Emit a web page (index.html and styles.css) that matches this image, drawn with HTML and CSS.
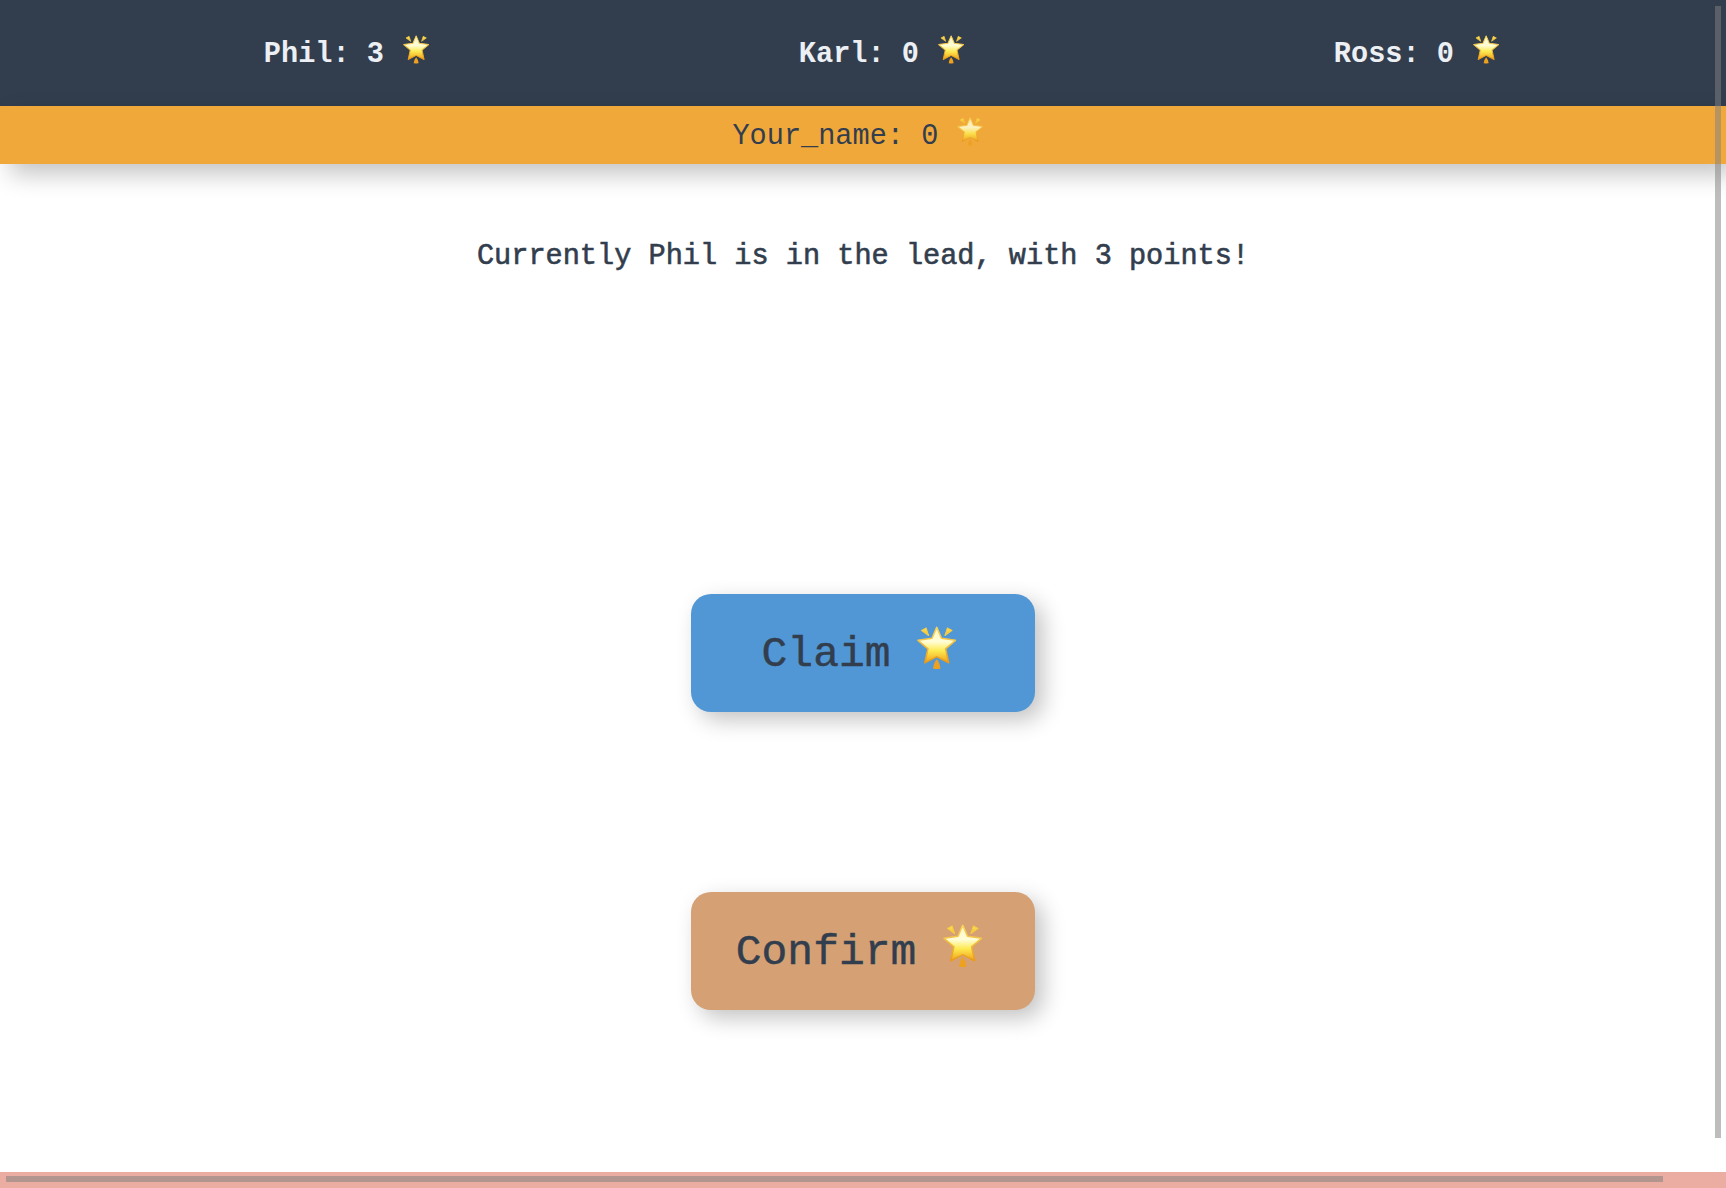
FILE: index.html
```html
<!DOCTYPE html>
<html lang="en">
<head>
<meta charset="utf-8">
<title>Star claims</title>
<link rel="stylesheet" href="styles.css">
</head>
<body>
<svg class="defs" aria-hidden="true">
  <defs>
    <linearGradient id="gold" x1="0" y1="0" x2="0" y2="1">
      <stop offset="0" stop-color="#fff6c0"/>
      <stop offset=".4" stop-color="#fffdd8"/>
      <stop offset=".66" stop-color="#fdea50"/>
      <stop offset="1" stop-color="#f0a01c"/>
    </linearGradient>
    <linearGradient id="rim" x1="0" y1="0" x2="0" y2="1">
      <stop offset="0" stop-color="#f7d55a"/>
      <stop offset=".45" stop-color="#f3c040"/>
      <stop offset="1" stop-color="#ea9a14"/>
    </linearGradient>
    <linearGradient id="ray" x1="0" y1="0" x2="0" y2="1">
      <stop offset="0" stop-color="#fbe45c"/>
      <stop offset="1" stop-color="#f2ba30"/>
    </linearGradient>
    <symbol id="star" viewBox="0 0 116 127">
      <path d="M13 13 27 6 34 28ZM103 13 89 6 82 28Z" fill="url(#ray)" stroke="#f6cb40" stroke-width="3" stroke-linejoin="round"/>
      <path d="M58 98q8 8 11 27-11 3-22 0 3-19 11-27Z" fill="#eea11f"/>
      <path d="M58 4 72 36 113 42 84 67 93 108 58 90 23 108 32 67 3 42 44 36Z" fill="url(#gold)" stroke="url(#rim)" stroke-width="4.5" stroke-linejoin="round"/>
    </symbol>
  </defs>
</svg>
<div class="page">
  <header class="scores">
    <div class="score">Phil: 3 <svg class="star"><use href="#star"/></svg></div>
    <div class="score">Karl: 0 <svg class="star"><use href="#star"/></svg></div>
    <div class="score">Ross: 0 <svg class="star"><use href="#star"/></svg></div>
  </header>
  <div class="player">Your_name: 0 <svg class="star faded"><use href="#star"/></svg></div>
  <main class="main">
    <h1 class="leader">Currently Phil is in the lead, with 3 points!</h1>
    <button class="button claim">Claim <svg class="star"><use href="#star"/></svg></button>
    <button class="button confirm">Confirm <svg class="star"><use href="#star"/></svg></button>
  </main>
  <footer class="footer"></footer>
</div>
<div class="scrollbar vertical"></div>
<div class="scrollbar horizontal"></div>
</body>
</html>
```

FILE: styles.css
```css
* { box-sizing: border-box; }

body {
  margin: 0;
  overflow: hidden;
  background: #fff;
  color: #323e4e;
  font: 28.6px "Liberation Mono", monospace;
}

.defs { position: absolute; width: 0; height: 0; }

.page { display: flex; flex-direction: column; height: 1188px; }

.scores {
  display: grid;
  grid-template-columns: repeat(3, 1fr);
  flex: 0 0 106px;
  padding: 3px 39px 0 82px;
  background: #323e4e;
  color: #eceff3;
  font-weight: bold;
  line-height: 103px;
}

.score { text-align: center; white-space: pre; }

.star {
  width: .92em;
  height: 1.007em;
  margin: 0 .21em 0 .063em;
  vertical-align: -.075em;
}

.faded { opacity: .85; }

.player {
  position: relative;
  flex: 0 0 58px;
  padding: 3px 4px 0 0;
  background: #f1a83b;
  box-shadow: 10px 10px 25px rgba(0, 0, 0, .24);
  line-height: 55px;
  text-align: center;
  white-space: pre;
}

.main {
  display: flex;
  flex: 1;
  flex-direction: column;
  align-items: center;
}

.leader {
  margin: 72px 0 317px;
  font-size: 28.6px;
  font-weight: normal;
  line-height: 41px;
  -webkit-text-stroke: .6px #323e4e;
}

.button {
  width: 344px;
  height: 118px;
  padding: 3px 0 0 3px;
  border: 0;
  border-radius: 20px;
  box-shadow: 8px 8px 22px rgba(0, 0, 0, .24);
  color: #323e4e;
  font: 42.95px/115px "Liberation Mono", monospace;
  white-space: pre;
  -webkit-text-stroke: .5px #323e4e;
}

.button .star { margin-left: .03em; margin-right: .243em; }

.claim { margin-bottom: 180px; background: #5197d5; }

.confirm { background: #d5a174; }

.footer { flex: 0 0 16px; background: #ebaca2; }

/* Overlay scroll indicators */
.scrollbar { position: absolute; background: rgba(128, 128, 128, .52); }

.vertical { top: 6px; left: 1715px; width: 6px; height: 1132px; }

.horizontal { top: 1176px; left: 6px; width: 1657px; height: 6px; }
```
